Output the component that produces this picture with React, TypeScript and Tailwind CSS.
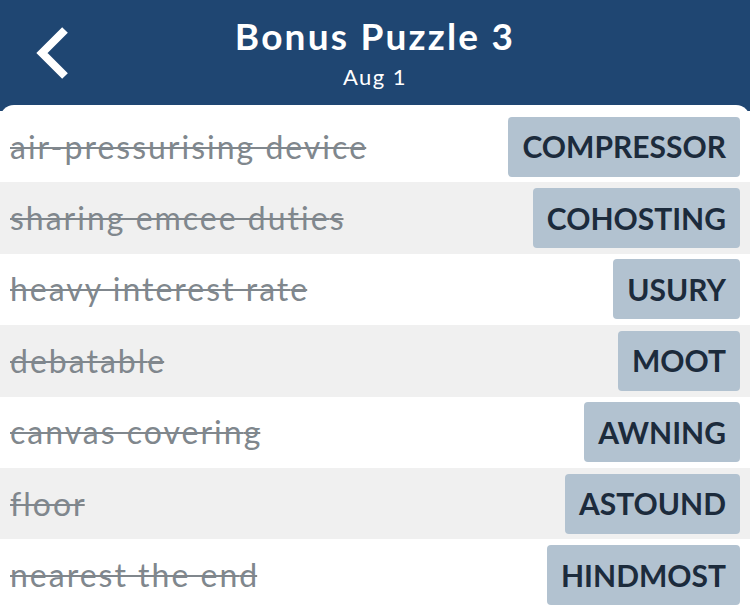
import React from "react";

const rows = [
  { clue: "air-pressurising device", answer: "COMPRESSOR" },
  { clue: "sharing emcee duties", answer: "COHOSTING" },
  { clue: "heavy interest rate", answer: "USURY" },
  { clue: "debatable", answer: "MOOT" },
  { clue: "canvas covering", answer: "AWNING" },
  { clue: "floor", answer: "ASTOUND" },
  { clue: "nearest the end", answer: "HINDMOST" },
];

export default function App() {
  return (
    <div
      className="w-[750px] h-[610px] overflow-hidden bg-[#1f4672] flex flex-col"
      style={{ fontFamily: "Lato, 'Open Sans', sans-serif" }}
    >
      <div className="h-[105px] shrink-0 relative flex flex-col items-center">
        <div className="absolute left-[32px] top-[24px]">
          <svg width="44" height="60" viewBox="0 0 44 60">
            <path
              d="M33 6 L10 29 L33 52"
              fill="none"
              stroke="#ffffff"
              strokeWidth="8"
              strokeLinecap="butt"
              strokeLinejoin="miter"
            />
          </svg>
        </div>
        <div className="mt-[14px] text-white font-bold text-[37px] leading-[44px] tracking-[2.2px]">
          Bonus Puzzle 3
        </div>
        <div className="text-white text-[22px] leading-[26px] mt-[6px] tracking-[1.5px]">Aug 1</div>
      </div>
      <div className="flex-1 bg-white rounded-t-[14px] pt-[6px] flex flex-col">
        {rows.map((r, i) => (
          <div
            key={r.answer}
            className={`h-[71.4px] shrink-0 flex items-center justify-between pl-[10px] pr-[10px] ${
              i % 2 === 1 ? "bg-[#f0f0f0]" : "bg-white"
            }`}
          >
            <span className="text-[32px] text-[#80878d] line-through decoration-[2px] decoration-[#80878d] tracking-[2px]">
              {r.clue.slice(0, -1)}
              <span className="tracking-normal">{r.clue.slice(-1)}</span>
            </span>
            <span className="h-[60px] flex items-center px-[14px] rounded-[4px] bg-[#b2c2d0] text-[#1c2b3c] font-bold text-[30px]">
              {r.answer}
            </span>
          </div>
        ))}
      </div>
    </div>
  );
}
